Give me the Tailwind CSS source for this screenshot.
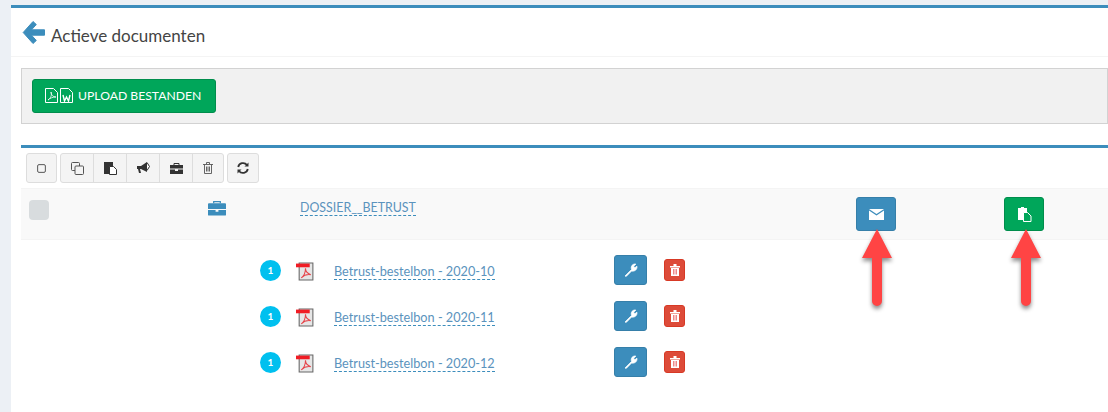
<!doctype html>
<html><head><meta charset="utf-8"><script src="https://cdn.jsdelivr.net/npm/@tailwindcss/browser@4"></script></head>
<body class="m-0 overflow-hidden">
<div class="relative w-[1108px] h-[412px] bg-[#ecf0f5] pt-[5px] pl-[11px] overflow-hidden font-['Lato','Liberation_Sans',sans-serif] text-[#333]">
 <div class="bg-white h-[407px] border-t-[3px] border-[#3c8dbc]">
  <div class="h-[49px] flex items-center pl-[11px] border-b border-[#f4f4f4]">
   <svg class="w-[23px] h-[25px] mt-[1px]" viewBox="0 0 23 25"><path d="M11 1.500 1.200 12.500 11 23.500l3.300-3L9.500 15.200H22.500V9.800H9.500L14.300 4.500z" fill="#3c8dbc" stroke="#3c8dbc" stroke-width="1" stroke-linejoin="round"/></svg>
   <span class="ml-[6px] mt-[6px] text-[17px] leading-none text-[#444]">Actieve documenten</span>
  </div>
  <div class="ml-[10px] mt-[11px] h-[56px] border border-[#d2d2d2] bg-[#f1f1f1] pl-[10px] pt-[10px]">
   <div class="w-[184px] h-[34px] bg-[#00a65a] border border-[#008d4c] rounded-[3px] flex items-center pl-[12px] text-white text-[12.200px]">
    <svg class="w-[13px] h-[15px] mt-[-2px]" viewBox="0 0 13 15" fill="none" stroke="white"><path d="M.5.500h8l4 4v10H.500z"/><path d="M3 12c3-2 4-5 3-8 0 3 2 5 5 5-3 0-6 1-8 3z" stroke-width=".8"/></svg>
    <svg class="w-[13px] h-[15px] ml-[2px] mt-[-2px]" viewBox="0 0 13 15" fill="none" stroke="white"><path d="M.5.500h8l4 4v10H.500z"/><path d="M3 7l1.500 6 2-4 2 4L10 7" stroke-width="1.400"/></svg>
    <span class="ml-[5px] mt-[1px]">UPLOAD BESTANDEN</span>
   </div>
  </div>
  <div class="ml-[10px] mt-[21px] border-t-[3px] border-[#3c8dbc]">
   <div class="flex gap-[3px] pl-[5px] pt-[5px] h-[35px]">
    <div class="w-[31px] h-[30px] bg-[#f4f4f4] border border-[#ddd] rounded-[3px] flex items-center justify-center">
     <svg class="w-[9px] h-[9px]" viewBox="0 0 10 10" fill="none"><rect x=".7" y=".7" width="8.600" height="8.600" rx="1.500" stroke="#555" stroke-width="1.100"/></svg>
    </div>
    <div class="h-[30px] bg-[#f4f4f4] border border-[#ddd] rounded-[3px] flex divide-x divide-[#ddd]">
     <div class="w-[33px] flex items-center justify-center"><svg class="w-[13px] h-[13px]" viewBox="0 0 13 13" fill="#f4f4f4" stroke="#555"><rect x=".5" y=".5" width="8" height="8" rx="1"/><rect x="4" y="4" width="8.500" height="8.500" rx="1"/></svg></div>
     <div class="w-[33px] flex items-center justify-center"><svg class="w-[13px] h-[14px]" viewBox="0 0 13 14"><path d="M0 1h9v12H0z" fill="#333"/><path d="M5.500 5.500h4l3 3v5h-7z" fill="#fff" stroke="#333"/></svg></div>
     <div class="w-[33px] flex items-center justify-center"><svg class="w-[13px] h-[12px]" viewBox="0 0 13 12"><path d="M0 4h4l6-4v10L4 7H3l1 4H2L1 7H0z" fill="#333"/><path d="M10 .5l2.500 4-2.500 4" fill="#fff" stroke="#333"/></svg></div>
     <div class="w-[33px] flex items-center justify-center"><svg class="w-[13px] h-[11px]" viewBox="0 0 13 11"><path d="M4 2V.5h5V2" fill="none" stroke="#333"/><path d="M0 2h13v3.500H0zM0 6.500h5V8h3V6.500h5V11H0z" fill="#333"/></svg></div>
     <div class="w-[30px] flex items-center justify-center"><svg class="w-[10px] h-[12px]" viewBox="0 0 10 12" fill="none" stroke="#555"><path d="M0 2.500h10M3.500 2V.5h3V2M1.500 2.500v9h7v-9M3.500 4.500v5M5 4.500v5M6.500 4.500v5" stroke-width=".9"/></svg></div>
    </div>
    <div class="w-[32px] h-[30px] bg-[#f4f4f4] border border-[#ddd] rounded-[3px] flex items-center justify-center">
     <svg class="w-[12px] h-[12px]" viewBox="0 0 12 12" fill="none" stroke="#333" stroke-width="1.800"><path d="M1.200 5A5 5 0 0 1 10 3"/><path d="M10.800 7A5 5 0 0 1 2 9"/><path d="M11.500.5v4h-4z" fill="#333" stroke="none"/><path d="M.5 11.500v-4h4z" fill="#333" stroke="none"/></svg>
    </div>
   </div>
   <div class="mt-[5px] h-[52px] bg-[#f9f9f9] border-y border-[#f4f4f4] flex relative">
    <div class="ml-[8px] mt-[11px] w-[20px] h-[20px] rounded-[4px] bg-[#d8dcde]"></div>
    <svg class="ml-[159px] mt-[11px] w-[18px] h-[17px]" viewBox="0 0 19 17"><path d="M6 3V1.200h7V3" fill="none" stroke="#3c8dbc" stroke-width="1.300"/><path d="M1 3h17a1 1 0 0 1 1 1v5H0V4a1 1 0 0 1 1-1zM0 10h8v2h3v-2h8v5a1 1 0 0 1-1 1H1a1 1 0 0 1-1-1z" fill="#3c8dbc"/></svg>
    <a class="absolute left-[279px] top-[11px] text-[12.400px] leading-[15px] text-[#5b93bd] border-b border-dashed border-[#3c8dbc]">DOSSIER__BETRUST</a>
    <div class="absolute left-[835px] top-[8px] w-[40px] h-[34px] bg-[#3c8dbc] border border-[#367fa9] rounded-[3px] flex items-center justify-center">
     <svg class="w-[15px] h-[11px]" viewBox="0 0 15 11"><path d="M0 0h15L7.500 5z" fill="#fff"/><path d="M0 1.500l7.500 5 7.500-5V11H0z" fill="#fff"/></svg>
    </div>
    <div class="absolute left-[983px] top-[8px] w-[40px] h-[34px] bg-[#00a65a] border border-[#008d4c] rounded-[3px] flex items-center justify-center">
     <svg class="w-[15px] h-[15px]" viewBox="0 0 15 15"><path d="M1 1h3v-1h3v1h3v12H1z" fill="#fff"/><path d="M6.500 5.500h4l3.500 3.500v5.500H6.500z" fill="#00a65a" stroke="#fff"/></svg>
    </div>
   </div>
   <div class="flex flex-col">
    <div class="h-[46px] mt-[7px] flex items-center pl-[239px]">
     <div class="w-[21px] h-[21px] rounded-full bg-[#00c0ef] text-white text-[10px] font-bold flex items-center justify-center">1</div>
     <svg class="ml-[15px] w-[19px] h-[19px] mt-[3px]" viewBox="0 0 18 18"><path d="M3 1h13v16H3z" fill="#e6e6e6" stroke="#666"/><path d="M0 1.500h13v3.500H0z" fill="#f01c24"/><path d="M5 15c3-2 4-5 4-9 0 3 2 5 5 6-3-.5-6 0-9 3z" fill="none" stroke="#e6444a"/></svg>
     <a class="ml-[19px] mt-[3px] text-[12.700px] leading-[15px] text-[#5b93bd] border-b border-dashed border-[#3c8dbc]">Betrust-bestelbon - 2020-10</a>
     <div class="absolute left-[614px] w-[33px] h-[30px] bg-[#3c8dbc] border border-[#367fa9] rounded-[3px] flex items-center justify-center"><svg class="w-[14px] h-[14px]" viewBox="0 0 13 13"><path d="M1 12 7 6c-1-3 1-5.500 4-5L9 3l1 1.500L12 3c.5 3-2 5-5 4.500L2 12.500z" fill="#fff" stroke="#fff" stroke-width=".7"/></svg></div>
     <div class="absolute left-[664px] w-[21px] h-[22px] bg-[#dd4b39] border border-[#d73925] rounded-[3px] flex items-center justify-center"><svg class="w-[10px] h-[12px]" viewBox="0 0 10 12"><path d="M0 2h10v1.500H0zM3.500 0h3v2h-3zM1 4h8v8H1z" fill="#fff"/><path d="M3.500 5v5.500M5 5v5.500M6.500 5v5.500" stroke="#e88"/></svg></div>
    </div>
    <div class="h-[46px] flex items-center pl-[239px]">
     <div class="w-[21px] h-[21px] rounded-full bg-[#00c0ef] text-white text-[10px] font-bold flex items-center justify-center">1</div>
     <svg class="ml-[15px] w-[19px] h-[19px] mt-[3px]" viewBox="0 0 18 18"><path d="M3 1h13v16H3z" fill="#e6e6e6" stroke="#666"/><path d="M0 1.500h13v3.500H0z" fill="#f01c24"/><path d="M5 15c3-2 4-5 4-9 0 3 2 5 5 6-3-.5-6 0-9 3z" fill="none" stroke="#e6444a"/></svg>
     <a class="ml-[19px] mt-[3px] text-[12.700px] leading-[15px] text-[#5b93bd] border-b border-dashed border-[#3c8dbc]">Betrust-bestelbon - 2020-11</a>
     <div class="absolute left-[614px] w-[33px] h-[30px] bg-[#3c8dbc] border border-[#367fa9] rounded-[3px] flex items-center justify-center"><svg class="w-[14px] h-[14px]" viewBox="0 0 13 13"><path d="M1 12 7 6c-1-3 1-5.500 4-5L9 3l1 1.500L12 3c.5 3-2 5-5 4.500L2 12.500z" fill="#fff" stroke="#fff" stroke-width=".7"/></svg></div>
     <div class="absolute left-[664px] w-[21px] h-[22px] bg-[#dd4b39] border border-[#d73925] rounded-[3px] flex items-center justify-center"><svg class="w-[10px] h-[12px]" viewBox="0 0 10 12"><path d="M0 2h10v1.500H0zM3.500 0h3v2h-3zM1 4h8v8H1z" fill="#fff"/><path d="M3.500 5v5.500M5 5v5.500M6.500 5v5.500" stroke="#e88"/></svg></div>
    </div>
    <div class="h-[46px] flex items-center pl-[239px]">
     <div class="w-[21px] h-[21px] rounded-full bg-[#00c0ef] text-white text-[10px] font-bold flex items-center justify-center">1</div>
     <svg class="ml-[15px] w-[19px] h-[19px] mt-[3px]" viewBox="0 0 18 18"><path d="M3 1h13v16H3z" fill="#e6e6e6" stroke="#666"/><path d="M0 1.500h13v3.500H0z" fill="#f01c24"/><path d="M5 15c3-2 4-5 4-9 0 3 2 5 5 6-3-.5-6 0-9 3z" fill="none" stroke="#e6444a"/></svg>
     <a class="ml-[19px] mt-[3px] text-[12.700px] leading-[15px] text-[#5b93bd] border-b border-dashed border-[#3c8dbc]">Betrust-bestelbon - 2020-12</a>
     <div class="absolute left-[614px] w-[33px] h-[30px] bg-[#3c8dbc] border border-[#367fa9] rounded-[3px] flex items-center justify-center"><svg class="w-[14px] h-[14px]" viewBox="0 0 13 13"><path d="M1 12 7 6c-1-3 1-5.500 4-5L9 3l1 1.500L12 3c.5 3-2 5-5 4.500L2 12.500z" fill="#fff" stroke="#fff" stroke-width=".7"/></svg></div>
     <div class="absolute left-[664px] w-[21px] h-[22px] bg-[#dd4b39] border border-[#d73925] rounded-[3px] flex items-center justify-center"><svg class="w-[10px] h-[12px]" viewBox="0 0 10 12"><path d="M0 2h10v1.500H0zM3.500 0h3v2h-3zM1 4h8v8H1z" fill="#fff"/><path d="M3.500 5v5.500M5 5v5.500M6.500 5v5.500" stroke="#e88"/></svg></div>
    </div>
   </div>
  </div>
 </div>
 <svg class="absolute left-[861px] top-[229px] w-[32px] h-[77px] overflow-visible drop-shadow-[0_3px_2px_rgba(0,0,0,0.45)]" viewBox="0 0 32 77"><path d="M16 0 31 29H21V72a5 5 0 0 1-10 0V29H1z" fill="#ff4444"/></svg>
 <svg class="absolute left-[1010px] top-[229px] w-[32px] h-[77px] overflow-visible drop-shadow-[0_3px_2px_rgba(0,0,0,0.45)]" viewBox="0 0 32 77"><path d="M16 0 31 29H21V72a5 5 0 0 1-10 0V29H1z" fill="#ff4444"/></svg>
</div>
</body></html>
